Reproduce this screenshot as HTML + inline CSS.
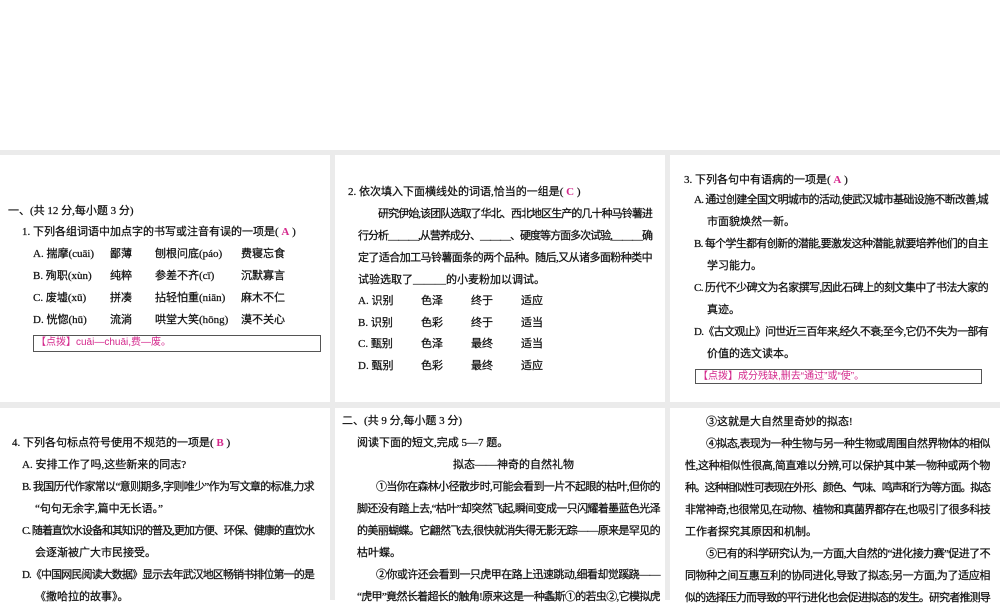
<!DOCTYPE html>
<html><head><meta charset="utf-8"><style>
html,body{margin:0;padding:0}
body{width:1000px;height:600px;position:relative;overflow:hidden;background:#fff;font-family:"Liberation Serif","Noto Sans CJK SC",sans-serif;color:#111}
.g{position:absolute;left:0;top:150px;width:1000px;height:450px;background:#ebebeb}
.p{position:absolute;background:#fff}
.l{position:absolute;white-space:nowrap;font-size:11px;line-height:14px;font-family:"Liberation Serif","Noto Sans CJK SC",sans-serif;-webkit-text-stroke:0.25px #111}
.a{color:#d4288c;font-weight:bold;-webkit-text-stroke:0}
.box{position:absolute;border:1px solid #555;font-size:10px;line-height:13px;color:#d4288c;padding-left:2px;box-sizing:border-box;font-family:"Liberation Sans","Noto Sans CJK SC",sans-serif}
</style></head><body>
<div class="g"></div>
<div class="p" style="left:0;top:155px;width:330px;height:247px"></div>
<div class="p" style="left:335px;top:155px;width:330px;height:247px"></div>
<div class="p" style="left:670px;top:155px;width:330px;height:247px"></div>
<div class="p" style="left:0;top:408px;width:330px;height:192px"></div>
<div class="p" style="left:335px;top:408px;width:330px;height:192px"></div>
<div class="p" style="left:670px;top:408px;width:330px;height:192px"></div>

<!-- panel 1 -->
<div class="l" style="left:8px;top:204px">一、(共 12 分,每小题 3 分)</div>
<div class="l" style="left:22px;top:225px">1. 下列各组词语中加点字的书写或注音有误的一项是( <span class="a">A</span> )</div>
<div class="l" style="left:33px;top:247px">A. 揣摩(cuāi)</div><div class="l" style="left:110px;top:247px">鄙薄</div><div class="l" style="left:155px;top:247px">刨根问底(páo)</div><div class="l" style="left:241px;top:247px">费寝忘食</div>
<div class="l" style="left:33px;top:269px">B. 殉职(xùn)</div><div class="l" style="left:110px;top:269px">纯粹</div><div class="l" style="left:155px;top:269px">参差不齐(cī)</div><div class="l" style="left:241px;top:269px">沉默寡言</div>
<div class="l" style="left:33px;top:291px">C. 废墟(xū)</div><div class="l" style="left:110px;top:291px">拼凑</div><div class="l" style="left:155px;top:291px">拈轻怕重(niān)</div><div class="l" style="left:241px;top:291px">麻木不仁</div>
<div class="l" style="left:33px;top:313px">D. 恍惚(hū)</div><div class="l" style="left:110px;top:313px">流淌</div><div class="l" style="left:155px;top:313px">哄堂大笑(hōng)</div><div class="l" style="left:241px;top:313px">漠不关心</div>
<div class="box" style="left:33px;top:335px;width:288px;height:17px">【点拨】cuāi—chuāi,费—废。</div>

<!-- panel 2 -->
<div class="l" style="left:348px;top:185px">2. 依次填入下面横线处的词语,恰当的一组是( <span class="a">C</span> )</div>
<div class="l j" data-w="274" style="left:378px;top:207px">研究伊始,该团队选取了华北、西北地区生产的几十种马铃薯进</div>
<div class="l j" data-w="294" style="left:358px;top:229px">行分析＿＿＿,从营养成分、＿＿＿、硬度等方面多次试验,＿＿＿确</div>
<div class="l j" data-w="294" style="left:358px;top:251px">定了适合加工马铃薯面条的两个品种。随后,又从诸多面粉种类中</div>
<div class="l" style="left:358px;top:273px">试验选取了＿＿＿的小麦粉加以调试。</div>
<div class="l" style="left:358px;top:294px">A. 识别</div><div class="l" style="left:421px;top:294px">色泽</div><div class="l" style="left:471px;top:294px">终于</div><div class="l" style="left:521px;top:294px">适应</div>
<div class="l" style="left:358px;top:316px">B. 识别</div><div class="l" style="left:421px;top:316px">色彩</div><div class="l" style="left:471px;top:316px">终于</div><div class="l" style="left:521px;top:316px">适当</div>
<div class="l" style="left:358px;top:337px">C. 甄别</div><div class="l" style="left:421px;top:337px">色泽</div><div class="l" style="left:471px;top:337px">最终</div><div class="l" style="left:521px;top:337px">适当</div>
<div class="l" style="left:358px;top:359px">D. 甄别</div><div class="l" style="left:421px;top:359px">色彩</div><div class="l" style="left:471px;top:359px">最终</div><div class="l" style="left:521px;top:359px">适应</div>

<!-- panel 3 -->
<div class="l" style="left:684px;top:173px">3. 下列各句中有语病的一项是( <span class="a">A</span> )</div>
<div class="l j" data-w="294" style="left:694px;top:193px">A. 通过创建全国文明城市的活动,使武汉城市基础设施不断改善,城</div>
<div class="l" style="left:707px;top:215px">市面貌焕然一新。</div>
<div class="l j" data-w="294" style="left:694px;top:237px">B. 每个学生都有创新的潜能,要激发这种潜能,就要培养他们的自主</div>
<div class="l" style="left:707px;top:259px">学习能力。</div>
<div class="l j" data-w="294" style="left:694px;top:281px">C. 历代不少碑文为名家撰写,因此石碑上的刻文集中了书法大家的</div>
<div class="l" style="left:707px;top:303px">真迹。</div>
<div class="l j" data-w="294" style="left:694px;top:325px">D.《古文观止》问世近三百年来,经久不衰;至今,它仍不失为一部有</div>
<div class="l" style="left:707px;top:347px">价值的选文读本。</div>
<div class="box" style="left:695px;top:369px;width:287px">【点拨】成分残缺,删去“通过”或“使”。</div>

<!-- panel 4 -->
<div class="l" style="left:12px;top:436px">4. 下列各句标点符号使用不规范的一项是( <span class="a">B</span> )</div>
<div class="l" style="left:22px;top:458px">A. 安排工作了吗,这些新来的同志?</div>
<div class="l j" data-w="292" style="left:22px;top:480px">B. 我国历代作家常以“意则期多,字则唯少”作为写文章的标准,力求</div>
<div class="l" style="left:35px;top:502px">“句句无余字,篇中无长语。”</div>
<div class="l j" data-w="292" style="left:22px;top:524px">C. 随着直饮水设备和其知识的普及,更加方便、环保、健康的直饮水</div>
<div class="l" style="left:35px;top:546px">会逐渐被广大市民接受。</div>
<div class="l j" data-w="292" style="left:22px;top:568px">D.《中国网民阅读大数据》显示去年武汉地区畅销书排位第一的是</div>
<div class="l" style="left:35px;top:590px">《撒哈拉的故事》。</div>

<!-- panel 5 -->
<div class="l" style="left:342px;top:414px">二、(共 9 分,每小题 3 分)</div>
<div class="l" style="left:357px;top:436px">阅读下面的短文,完成 5—7 题。</div>
<div class="l" style="left:453px;top:458px">拟态——神奇的自然礼物</div>
<div class="l j" data-w="284" style="left:376px;top:480px">①当你在森林小径散步时,可能会看到一片不起眼的枯叶,但你的</div>
<div class="l j" data-w="303" style="left:357px;top:502px">脚还没有踏上去,“枯叶”却突然飞起,瞬间变成一只闪耀着墨蓝色光泽</div>
<div class="l j" data-w="303" style="left:357px;top:524px">的美丽蝴蝶。它翩然飞去,很快就消失得无影无踪——原来是罕见的</div>
<div class="l" style="left:357px;top:546px">枯叶蝶。</div>
<div class="l j" data-w="284" style="left:376px;top:568px">②你或许还会看到一只虎甲在路上迅速跳动,细看却觉蹊跷——</div>
<div class="l j" data-w="303" style="left:357px;top:590px">“虎甲”竟然长着超长的触角!原来这是一种螽斯①的若虫②,它模拟虎</div>

<!-- panel 6 -->
<div class="l" style="left:706px;top:415px">③这就是大自然里奇妙的拟态!</div>
<div class="l j" data-w="284" style="left:706px;top:437px">④拟态,表现为一种生物与另一种生物或周围自然界物体的相似</div>
<div class="l j" data-w="305" style="left:685px;top:459px">性,这种相似性很高,简直难以分辨,可以保护其中某一物种或两个物</div>
<div class="l j" data-w="305" style="left:685px;top:481px">种。这种相似性可表现在外形、颜色、气味、鸣声和行为等方面。拟态</div>
<div class="l j" data-w="305" style="left:685px;top:503px">非常神奇,也很常见,在动物、植物和真菌界都存在,也吸引了很多科技</div>
<div class="l" style="left:685px;top:525px">工作者探究其原因和机制。</div>
<div class="l j" data-w="284" style="left:706px;top:547px">⑤已有的科学研究认为,一方面,大自然的“进化接力赛”促进了不</div>
<div class="l j" data-w="305" style="left:685px;top:569px">同物种之间互惠互利的协同进化,导致了拟态;另一方面,为了适应相</div>
<div class="l j" data-w="305" style="left:685px;top:591px">似的选择压力而导致的平行进化也会促进拟态的发生。研究者推测导</div>
<script>
document.querySelectorAll('.j').forEach(function(e){
  var w=+e.getAttribute('data-w');
  var n=e.textContent.length;
  var nat=e.getBoundingClientRect().width;
  e.style.letterSpacing=((w-nat)/n)+'px';
});
</script>
</body></html>
